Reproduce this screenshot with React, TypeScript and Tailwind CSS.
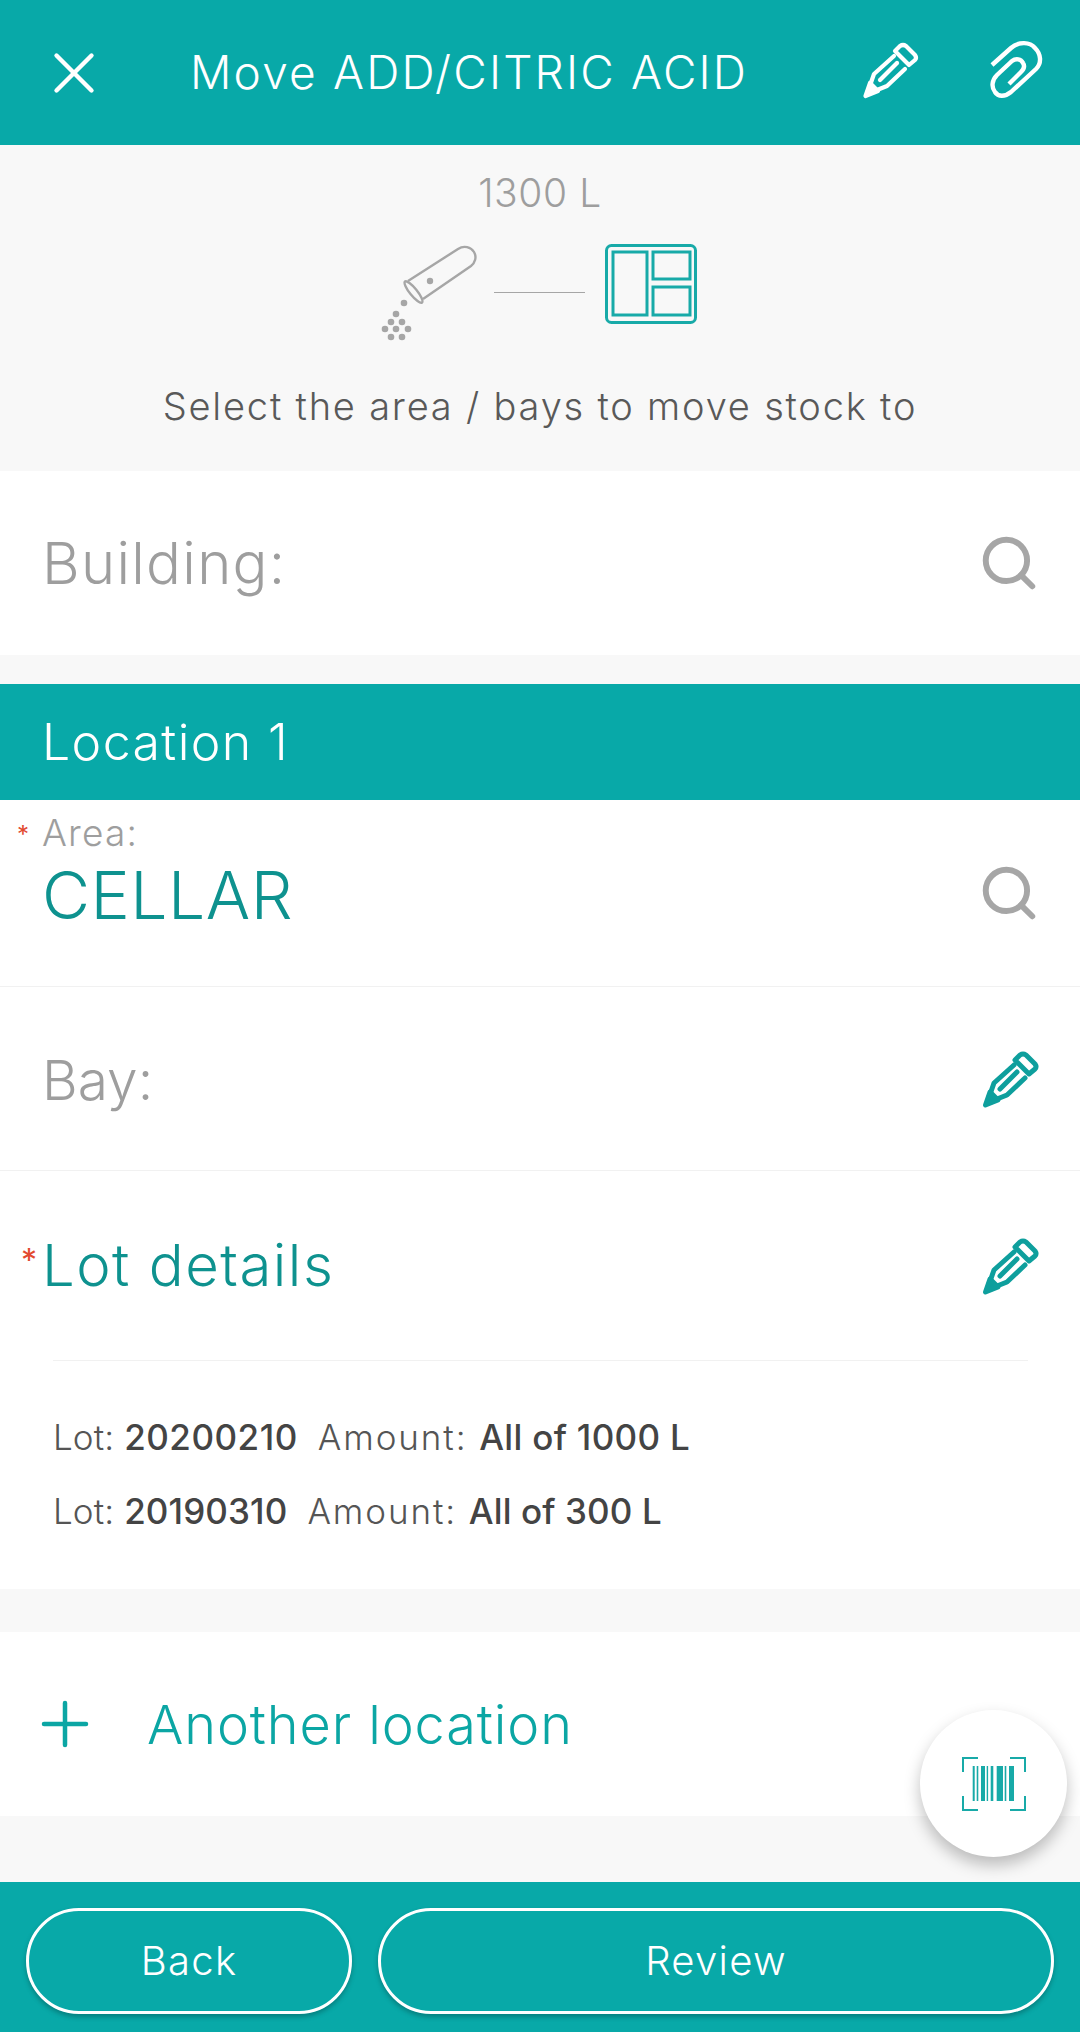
import { Search, X, Plus } from "lucide-react";

const font = { fontFamily: "Inter, 'Noto Sans', sans-serif" };

function PencilIcon({ className, weight = 4.2 }: { className?: string; weight?: number }) {
  return (
    <svg viewBox="0 0 80 80" className={className} fill="none" stroke="currentColor" strokeWidth={weight} strokeLinejoin="round" strokeLinecap="round">
      <path d="M44 26 L24 44 L17 64 L37 56 L55 39" />
      <path d="M30 50 L47 33" />
      <path d="M45 21 L50 16 Q53 14 56 16 L65 25 Q67 28 65 30 L59 35 Z" />
      <path d="M15.5 66 L20 53 L28 61 Z" fill="currentColor" />
    </svg>
  );
}

function ClipIcon({ className }: { className?: string }) {
  return (
    <svg viewBox="0 0 80 80" className={className} fill="none" stroke="currentColor" strokeWidth="4.4" strokeLinecap="butt" strokeLinejoin="round">
      <path d="M17 35 L36 18 C44 11 55 12 60 18 C66 24 67 33 61 39 L36 62 C30 67 23 67 20 62 C16 57 17 50 22 45 L37 31 C41 28 46 29 48 33 C50 36 49 39 46 42 L34 54" />
    </svg>
  );
}

function ShakerIcon() {
  const dots = [
    [64, 143], [56, 154], [51, 162], [62, 162], [45, 169],
    [56, 169], [68, 169], [51, 177], [62, 177],
  ];
  return (
    <svg viewBox="40 85 100 100" className="mt-[1px] h-[100px] w-[100px] text-[#a6a6a6]" fill="none" stroke="currentColor" strokeWidth="2.4">
      <path d="M68 121 L118 89 C124 85 131 87 134 92 C137 97 135 103 131 106 L83 139" strokeLinejoin="round" />
      <ellipse cx="73.5" cy="132" rx="13.5" ry="3.6" transform="rotate(51 73.5 132)" />
      <circle cx="90" cy="121" r="3.2" fill="currentColor" stroke="none" />
      {dots.map(([cx, cy]) => (
        <circle key={`${cx}-${cy}`} cx={cx} cy={cy} r="3.3" fill="currentColor" stroke="none" />
      ))}
    </svg>
  );
}

function BaysIcon() {
  return (
    <svg viewBox="0 0 92 80" className="h-[80px] w-[92px] text-[#18aaa8]" fill="none" stroke="currentColor" strokeWidth="3">
      <rect x="1.5" y="1.5" width="89" height="77" rx="5" />
      <rect x="8" y="8" width="34" height="63" />
      <rect x="48" y="8" width="37" height="27" />
      <rect x="48" y="43" width="37" height="28" />
    </svg>
  );
}

function BarcodeIcon() {
  const bars: [number, number][] = [
    [10.7, 2], [14.7, 1.6], [19, 4], [24.7, 1.4], [28.7, 2.6], [34.7, 6.3], [42.7, 1.6], [47, 5],
  ];
  return (
    <svg viewBox="0 0 64 54" className="h-[54px] w-[64px] text-[#18aaa8]">
      <path d="M1 15 V1 H16 M48 1 H63 V15 M1 39 V53 H16 M48 53 H63 V39" fill="none" stroke="currentColor" strokeWidth="2" />
      {bars.map(([x, w]) => (
        <rect key={x} x={x} y="9" width={w} height="35" fill="currentColor" />
      ))}
    </svg>
  );
}

function Asterisk({ className }: { className: string }) {
  return <span className={`font-normal text-[#e2492f] ${className}`}>*</span>;
}

export default function App() {
  return (
    <div style={font} className="relative flex h-[2032px] w-[1080px] flex-col overflow-hidden bg-[#f8f8f8]">
      <header className="flex h-[145px] items-center bg-[#08a9a8] text-white">
        <X className="ml-[39px] h-[70px] w-[70px]" strokeWidth={1.5} />
        <h1 className="ml-[81px] flex-1 text-[46px] font-light tracking-[2.2px]">Move ADD/CITRIC ACID</h1>
        <PencilIcon className="mr-[45px] mb-[5px] h-[80px] w-[80px]" />
        <ClipIcon className="mr-[25px] mb-[5px] h-[80px] w-[80px]" />
      </header>

      <section className="flex h-[326px] flex-col items-center">
        <div className="mt-[25px] text-[39px] leading-[46px] font-light tracking-[0.6px] text-[#9e9e9e]">1300 L</div>
        <div className="mt-[28px] mr-[3px] flex h-[100px] items-start">
          <ShakerIcon />
          <div className="mt-[48px] mr-[20px] ml-[14px] h-[1px] w-[91px] bg-[#a6a6a6]" />
          <BaysIcon />
        </div>
        <p className="mt-[39px] text-[38px] leading-[46px] font-light tracking-[1.8px] text-[#595959]">Select the area / bays to move stock to</p>
      </section>

      <div className="flex h-[184px] items-center justify-between bg-white pr-[40px] pl-[42px]">
        <span className="text-[58px] font-light tracking-[1.3px] text-[#9e9e9e]">Building:</span>
        <Search className="h-[62px] w-[62px] text-[#a6a6a6]" strokeWidth={2.3} />
      </div>

      <div className="mt-[29px] flex h-[116px] items-center bg-[#08a9a8] pl-[42px] text-[50px] font-light tracking-[1.4px] text-white">Location 1</div>

      <div className="relative flex h-[187px] items-start justify-between border-b border-[#f1f1f1] bg-white pt-[7px] pr-[40px] pl-[42px]">
        <div>
          <div className="relative text-[37px] leading-[51px] font-light tracking-[1.2px] text-[#9e9e9e]">
            <Asterisk className="absolute top-[17px] -left-[25px] text-[24px] leading-[22px]" />
            Area:
          </div>
          <div className="text-[66px] leading-[74px] font-light tracking-[0.5px] text-[#0e928f]">CELLAR</div>
        </div>
        <Search className="mt-[55px] h-[62px] w-[62px] text-[#a6a6a6]" strokeWidth={2.3} />
      </div>

      <div className="flex h-[184px] items-center justify-between border-b border-[#f1f1f1] bg-white pr-[30px] pl-[42px]">
        <span className="mt-[3px] text-[55px] font-light text-[#9e9e9e]">Bay:</span>
        <PencilIcon className="h-[80px] w-[80px] text-[#0e9f9d]" weight={5} />
      </div>

      <div className="flex h-[418px] flex-col bg-white">
        <div className="flex h-[189px] items-center justify-between pr-[30px] pl-[42px]">
          <div className="relative text-[58px] font-light tracking-[1.5px] text-[#0e928f]">
            <Asterisk className="absolute top-[25px] -left-[21px] text-[32px] leading-[28px]" />
            Lot details
          </div>
          <PencilIcon className="h-[80px] w-[80px] text-[#0e9f9d]" weight={5} />
        </div>
        <div className="mr-[52px] ml-[53px] h-[1px] bg-[#f1f1f1]" />
        <div className="mt-[54px] flex flex-col gap-[30px] pl-[53px] text-[35px] leading-[44px] font-light text-[#555]">
          <div>
            <span className="tracking-[0.1px]">Lot: </span>
            <b className="font-medium tracking-[0.5px] text-[#444]">20200210</b>
            <span className="ml-[20px] tracking-[1.9px]">Amount: </span>
            <b className="font-medium tracking-[0.3px] text-[#444]">All of 1000 L</b>
          </div>
          <div>
            <span className="tracking-[0.1px]">Lot: </span>
            <b className="font-medium tracking-[0.1px] text-[#444]">20190310</b>
            <span className="ml-[20px] tracking-[1.9px]">Amount: </span>
            <b className="font-medium tracking-[0.1px] text-[#444]">All of 300 L</b>
          </div>
        </div>
      </div>

      <div className="mt-[43px] flex h-[184px] items-center bg-white pl-[29px] text-[#0ba6a4]">
        <Plus className="h-[72px] w-[72px]" strokeWidth={1.5} />
        <span className="ml-[46px] text-[54px] font-light tracking-[0.9px]">Another location</span>
      </div>

      <button className="absolute top-[1710px] left-[920px] flex h-[147px] w-[147px] items-center justify-center rounded-full bg-white shadow-[0_8px_16px_rgba(0,0,0,0.25)]">
        <BarcodeIcon />
      </button>

      <footer className="mt-auto flex h-[150px] items-center gap-[26px] bg-[#08a9a8] px-[26px] pt-[8px] text-[40px] font-light tracking-[1.3px] text-white">
        <button className="h-[106px] w-[326px] rounded-[53px] border-[3px] border-white shadow-[0_3px_5px_rgba(0,0,0,0.25)]">Back</button>
        <button className="h-[106px] flex-1 rounded-[53px] border-[3px] border-white shadow-[0_3px_5px_rgba(0,0,0,0.25)]">Review</button>
      </footer>
    </div>
  );
}
